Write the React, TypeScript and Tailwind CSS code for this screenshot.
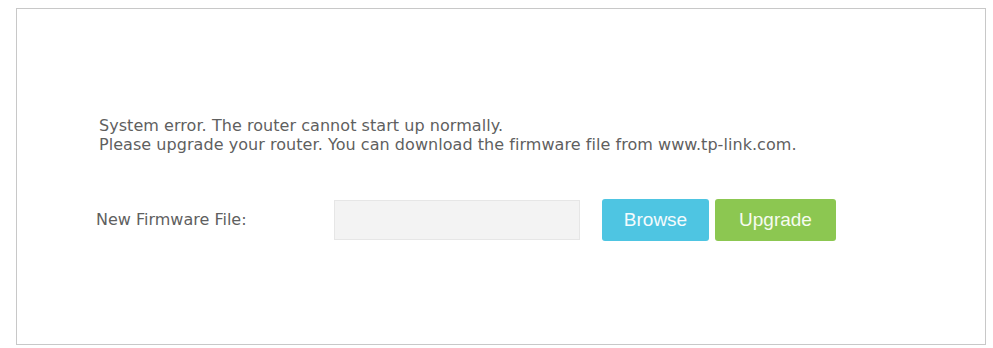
export default function App() {
  return (
    <div className="w-[993px] h-[348px] bg-white pt-2 pl-4 font-['DejaVu_Sans',sans-serif]">
      <div className="w-[970px] h-[337px] border border-[#c8c8c8] pt-[107px]">
        <div className="pl-[82px] text-[16px] leading-[19px] tracking-[0.05px] text-[#5f5f5f]">
          <p>System error. The router cannot start up normally.</p>
          <p>Please upgrade your router. You can download the firmware file from www.tp-link.com.</p>
        </div>

        <div className="flex items-center pl-[79px] mt-[45px]">
          <div className="w-[238px] text-[16px] text-[#5f5f5f]">New Firmware File:</div>
          <input
            type="text"
            className="w-[246px] h-[40px] bg-[#f3f3f3] border border-[#e6e6e6] outline-none"
          />
          <button className="ml-[22px] w-[107px] h-[42px] rounded-[3px] bg-[#4ec5e2] text-[#f4fbfd] text-[19px] font-['Liberation_Sans',sans-serif]">
            Browse
          </button>
          <button className="ml-[6px] w-[121px] h-[42px] rounded-[3px] bg-[#8cc751] text-[#f6fbf0] text-[19px] font-['Liberation_Sans',sans-serif]">
            Upgrade
          </button>
        </div>
      </div>
    </div>
  );
}
